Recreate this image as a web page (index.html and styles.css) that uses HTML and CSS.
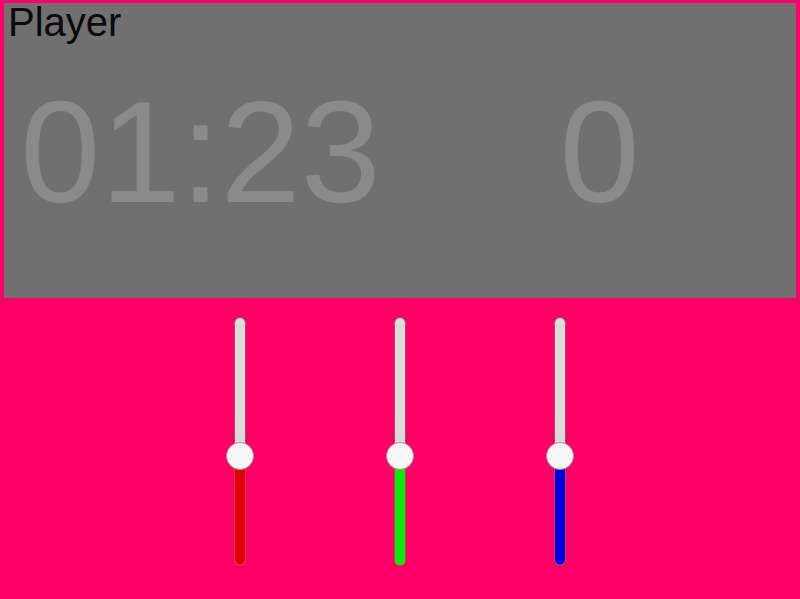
FILE: index.html
```html
<!DOCTYPE html>
<html lang="en">
<head>
  <meta charset="UTF-8">
  <title>Player</title>
  <link rel="stylesheet" href="styles.css">
</head>
<body>
  <!-- Panel del jugador -->
  <div class="panel">
    <div class="nombre">Player</div>
    <div class="marcador">
      <div class="tiempo">01:23</div>
      <div class="puntos">0</div>
    </div>
  </div>

  <!-- Deslizadores de color -->
  <div class="sliders">
    <div class="track">
      <div class="fill rojo" style="height: 44%"></div>
      <div class="thumb" style="bottom: 44%"></div>
    </div>
    <div class="track">
      <div class="fill verde" style="height: 44%"></div>
      <div class="thumb" style="bottom: 44%"></div>
    </div>
    <div class="track">
      <div class="fill azul" style="height: 44%"></div>
      <div class="thumb" style="bottom: 44%"></div>
    </div>
  </div>
</body>
</html>
```

FILE: styles.css
```css
html, body {
  margin: 0;
  padding: 0;
}
body {
  font-family: "Liberation Sans", Arial, sans-serif;
  background: #ff0066;
  height: 599px;
  overflow: hidden;
}
.panel {
  margin: 3px 4px 0 4px;
  height: 295px;
  background: #707070;
}
.nombre {
  font-size: 40px;
  line-height: 38px;
  color: #0a0a0a;
  padding-left: 4px;
}
.marcador {
  display: flex;
}
.tiempo, .puntos {
  flex: 1;
  text-align: center;
  font-size: 144px;
  line-height: 224px;
  color: #8a8a8a;
}
.tiempo {
  padding-right: 6px;
}
.sliders {
  display: flex;
  justify-content: center;
  gap: 150px;
  padding-top: 20px;
}
.track {
  position: relative;
  width: 10px;
  height: 247px;
  border-radius: 5px;
  background: #dcdcdc;
  box-shadow: 0 0 0 1px rgba(120, 120, 120, 0.5);
}
.fill {
  position: absolute;
  left: 0;
  bottom: 0;
  width: 10px;
  border-radius: 0 0 5px 5px;
}
.rojo { background: #e60000; }
.verde { background: #00ee00; }
.azul { background: #0000dd; }
.thumb {
  position: absolute;
  left: -9px;
  width: 26px;
  height: 26px;
  margin-bottom: -14px;
  border-radius: 50%;
  background: #f6f6f6;
  border: 1px solid #999;
}
```
